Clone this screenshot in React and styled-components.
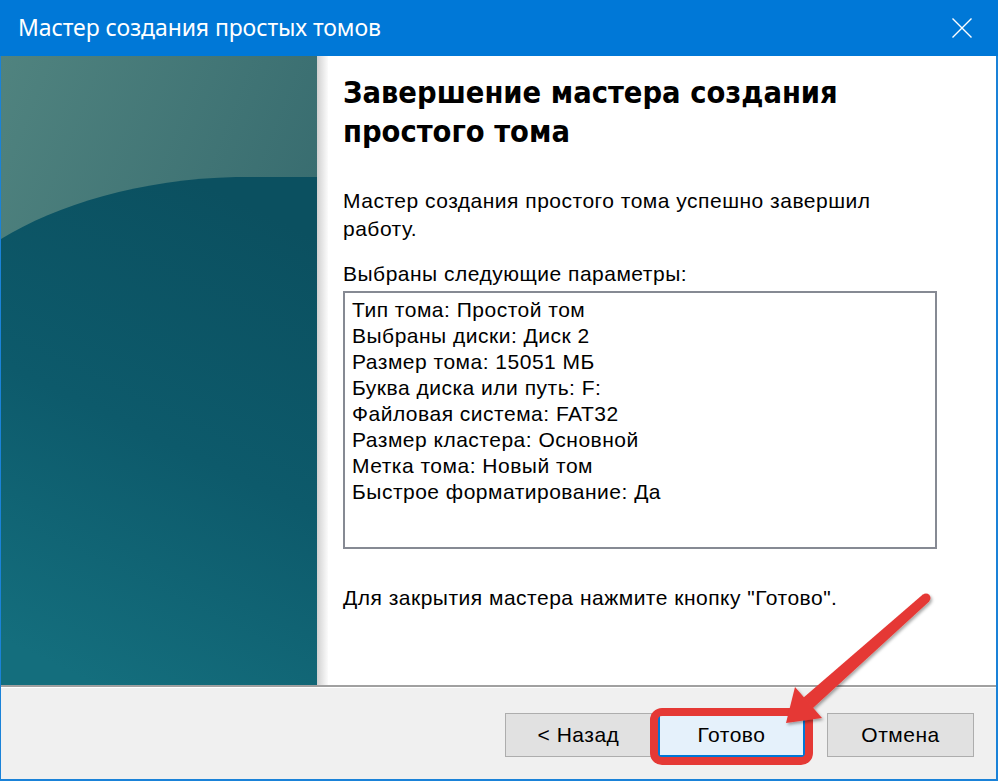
import React from "react";
import styled, { createGlobalStyle } from "styled-components";

const Global = createGlobalStyle`
  html, body { margin: 0; padding: 0; background: #fff; }
  body { width: 998px; height: 781px; overflow: hidden; }
`;

const Window = styled.div`
  position: relative;
  width: 998px;
  height: 781px;
  box-sizing: border-box;
  display: flex;
  flex-direction: column;
  border-left: 1px solid #1a82d8;
  border-right: 2px solid #1a82d8;
  border-bottom: 2px solid #1a82d8;
  background: #fff;
  font-family: "Liberation Sans", Arial, sans-serif;
`;

const TitleBar = styled.div`
  height: 56px;
  margin-left: -1px;
  margin-right: -2px;
  flex: none;
  background: #0078d7;
  display: flex;
  align-items: center;
  justify-content: space-between;
  padding: 0 25px 0 18px;
`;

const Title = styled.div`
  color: #fff;
  font-family: "Noto Sans", "Open Sans", sans-serif;
  font-size: 23px;
  letter-spacing: -0.1px;
  padding-bottom: 2px;
`;

const Body = styled.div`
  flex: 1;
  display: flex;
  min-height: 0;
`;

const SidePanel = styled.div`
  width: 316px;
  flex: none;
  display: block;
  svg { display: block; }
`;

const PanelShadow = styled.div`
  width: 11px;
  flex: none;
  background: linear-gradient(to right, #cfcfcf, #e2e2e2 40%, #f1f1f1 75%, #fbfbfb);
`;

const Content = styled.div`
  flex: 1;
  padding: 17px 0 0 15px;
  display: flex;
  flex-direction: column;
  align-items: flex-start;
`;

const Heading = styled.h1`
  margin: 0;
  font-family: "DejaVu Sans Condensed", "DejaVu Sans", Verdana, sans-serif;
  font-stretch: condensed;
  font-weight: bold;
  font-size: 30.5px;
  line-height: 39px;
  color: #000;
  width: 600px;
`;

const Text = styled.p`
  margin: ${(p) => p.$mt || 0}px 0 0 0;
  font-size: 21px;
  letter-spacing: 0.5px;
  line-height: ${(p) => p.$lh || 28}px;
  color: #000;
  width: 600px;
`;

const ParamBox = styled.div`
  margin-top: 3px;
  width: 594px;
  height: 258px;
  box-sizing: border-box;
  border: 2px solid #868a93;
  padding: 4px 7px 0;
  font-size: 21px;
  letter-spacing: 0.5px;
  line-height: 26px;
  color: #000;
`;

const Separator = styled.div`
  height: 3px;
  flex: none;
  border-top: 2px solid #a0a0a0;
  box-sizing: border-box;
  background: #fff;
`;

const Footer = styled.div`
  height: 91px;
  flex: none;
  background: #f0f0f0;
  display: flex;
  justify-content: flex-end;
  align-items: flex-start;
  padding: 25px 22px 0 0;
  box-sizing: border-box;
  gap: 22px;
`;

const ButtonGroup = styled.div`
  display: flex;
  gap: 6px;
`;

const Button = styled.button`
  width: 147px;
  height: 44px;
  box-sizing: border-box;
  font-family: "Liberation Sans", Arial, sans-serif;
  font-size: 21px;
  letter-spacing: 0.5px;
  color: #000;
  background: ${(p) => (p.$primary ? "#e5f1fb" : "#e1e1e1")};
  border: ${(p) => (p.$primary ? "2px solid #0078d7" : "1px solid #adadad")};
  padding: 0;
  cursor: default;
`;

const Overlay = styled.svg`
  position: absolute;
  left: -1px;
  top: 0;
  width: 998px;
  height: 781px;
  pointer-events: none;
`;

function PanelArt() {
  return (
    <svg width="316" height="629" viewBox="0 0 316 629" preserveAspectRatio="none">
      <defs>
        <linearGradient id="top" x1="0" y1="0" x2="1" y2="0.8">
          <stop offset="0" stopColor="#50837f" />
          <stop offset="1" stopColor="#2f646a" />
        </linearGradient>
        <linearGradient id="bot" x1="0.6" y1="0" x2="0.3" y2="1">
          <stop offset="0" stopColor="#0b5060" />
          <stop offset="0.5" stopColor="#0d5a6b" />
          <stop offset="1" stopColor="#146e7d" />
        </linearGradient>
      </defs>
      <rect x="0" y="0" width="316" height="629" fill="url(#top)" />
      <path d="M0 183 C 55 149, 140 123, 235 121 L 316 121 L 316 629 L 0 629 Z" fill="url(#bot)" />
    </svg>
  );
}

function CloseIcon() {
  return (
    <svg width="22" height="22" viewBox="0 0 22 22">
      <path d="M1.5 1.5 L20.5 20.5 M20.5 1.5 L1.5 20.5" stroke="#fff" strokeWidth="1.4" fill="none" />
    </svg>
  );
}

const params = [
  "Тип тома: Простой том",
  "Выбраны диски: Диск 2",
  "Размер тома: 15051 МБ",
  "Буква диска или путь: F:",
  "Файловая система: FAT32",
  "Размер кластера: Основной",
  "Метка тома: Новый том",
  "Быстрое форматирование: Да",
];

export default function App() {
  return (
    <>
      <Global />
      <Window>
        <TitleBar>
          <Title>Мастер создания простых томов</Title>
          <CloseIcon />
        </TitleBar>
        <Body>
          <SidePanel>
            <PanelArt />
          </SidePanel>
          <PanelShadow />
          <Content>
            <Heading>
              Завершение мастера создания
              <br />
              простого тома
            </Heading>
            <Text $mt={36}>
              Мастер создания простого тома успешно завершил
              <br />
              работу.
            </Text>
            <Text $mt={17}>Выбраны следующие параметры:</Text>
            <ParamBox>
              {params.map((p) => (
                <div key={p}>{p}</div>
              ))}
            </ParamBox>
            <Text $mt={35}>Для закрытия мастера нажмите кнопку "Готово".</Text>
          </Content>
        </Body>
        <Separator />
        <Footer>
          <ButtonGroup>
            <Button>&lt; Назад</Button>
            <Button $primary>Готово</Button>
          </ButtonGroup>
          <Button>Отмена</Button>
        </Footer>
        <Overlay viewBox="0 0 998 781">
          <defs>
            <filter id="sh" x="-20%" y="-20%" width="140%" height="140%">
              <feDropShadow dx="1.5" dy="2" stdDeviation="1.8" floodColor="#000" floodOpacity="0.35" />
            </filter>
          </defs>
          <rect x="654" y="712" width="155" height="49" rx="8" ry="8" fill="none" stroke="#e53935" strokeWidth="8" />
          <g filter="url(#sh)" fill="#e53935">
            <circle cx="926" cy="598" r="4.5" />
            <polygon points="929.2,601.4 922.8,594.6 803.3,697.8 812.7,708.2" />
            <polygon points="786,723 795,687 822,718" />
          </g>
        </Overlay>
      </Window>
    </>
  );
}
